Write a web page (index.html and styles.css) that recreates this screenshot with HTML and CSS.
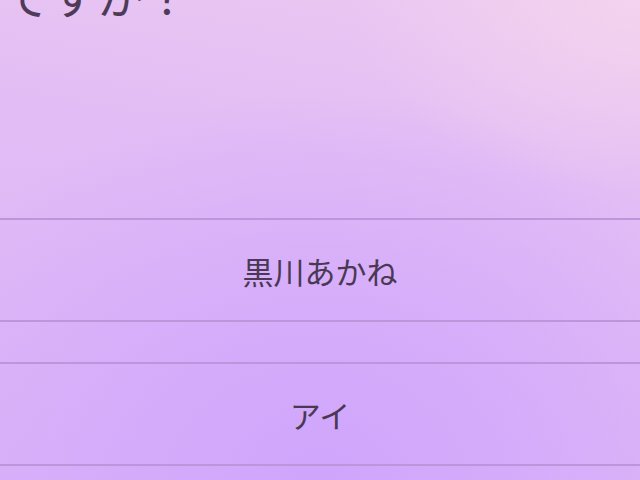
FILE: index.html
```html
<!DOCTYPE html>
<html lang="ja">
  <head>
    <meta charset="UTF-8" />
    <meta name="viewport" content="width=device-width, initial-scale=1.0" />
    <title>クイズ</title>
    <link rel="stylesheet" href="styles.css">
  </head>
  <body>
    <h1 class="question">ですか？</h1>

    <div class="choices">
      <div class="choice">黒川あかね</div>
      <div class="choice">アイ</div>
    </div>
  </body>
</html>
```

FILE: styles.css
```css
html {
  font-family: "Noto Sans CJK JP", "Noto Sans", sans-serif;
  background-color: #dab4f8;
  background-image:
    radial-gradient(ellipse 45% 40% at 100% 0%, rgba(244, 212, 238, 0.9) 0%, transparent 100%),
    radial-gradient(ellipse 75% 85% at 50% 100%, #cfa5fc 0%, rgba(212, 170, 251, 0.7) 50%, transparent 95%),
    linear-gradient(190deg, #ecc9f1 0%, #e2bdf5 35%, #d9b3f7 100%);
  height: 100%;
  overflow: hidden;
}
body {
  margin: 0;
  height: 100%;
  color: #4a3854;
}
.question {
  margin: -30px 0 0;
  padding-left: 3px;
  font-size: 47px;
  font-weight: 400;
  line-height: 1;
  color: #4e3b58;
}

.choices {
  margin-top: 201px; /* 첫 줄 위치 */
}

.choice {
  height: 100px;
  display: flex;
  justify-content: center;
  align-items: center;
  font-size: 31px;
  border-top: 2px solid #bc96da;
  border-bottom: 2px solid #bc96da;
  margin-bottom: 40px;
}
```
